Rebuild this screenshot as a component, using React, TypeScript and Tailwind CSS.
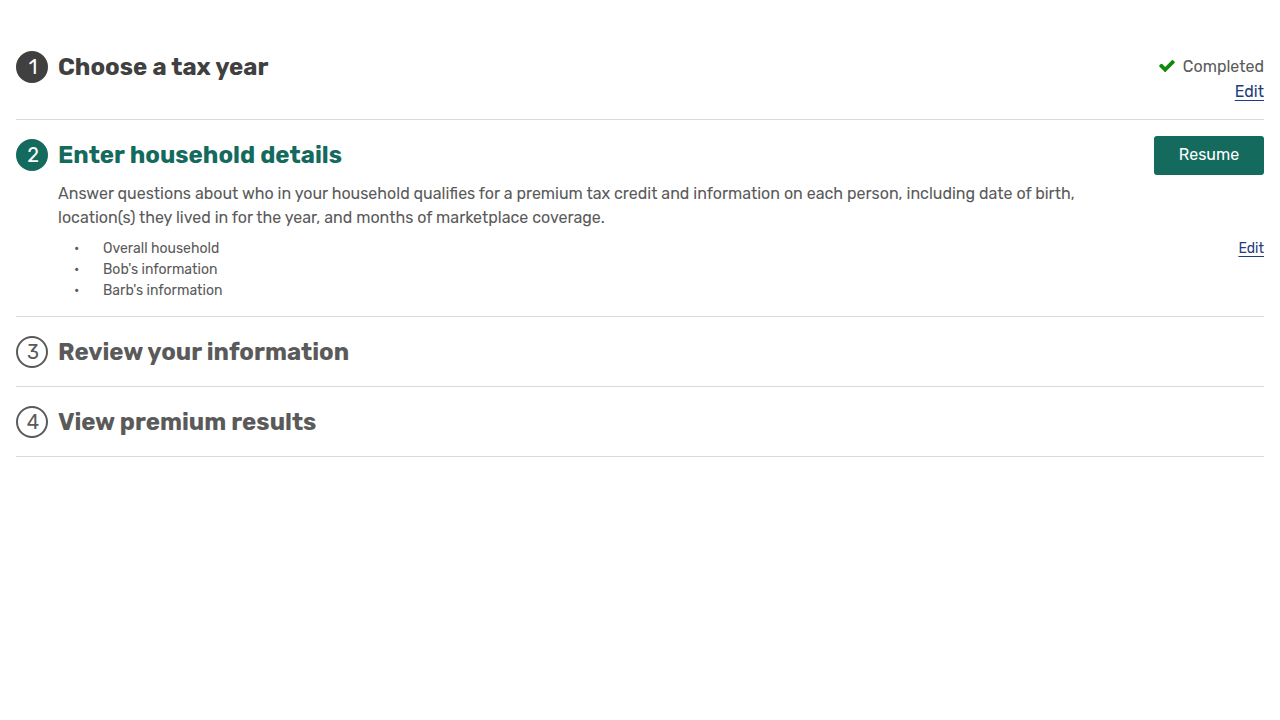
import type { ReactNode } from "react";

type Status = "completed" | "current" | "upcoming";

const circleStyles: Record<Status, string> = {
  completed: "border-[#404040] bg-[#404040] text-white",
  current: "border-[#146a5d] bg-[#146a5d] text-white",
  upcoming: "border-[#5a5a5a] bg-white text-[#5a5a5a]",
};

const headingStyles: Record<Status, string> = {
  completed: "text-[#404040]",
  current: "text-[#146a5d]",
  upcoming: "text-[#5a5a5a]",
};

const people = ["Overall household", "Bob's information", "Barb's information"];

function CheckIcon() {
  return (
    <svg viewBox="121 334 1550 1188" className="mb-0.5 h-3 w-4 fill-[#12890e]" aria-hidden="true">
      <path d="M1671 566q0 40-28 68l-724 724-136 136q-28 28-68 28t-68-28l-136-136-362-362q-28-28-28-68t28-68l136-136q28-28 68-28t68 28l294 295 656-657q28-28 68-28t68 28l136 136q28 28 28 68z" />
    </svg>
  );
}

function EditLink({ label }: { label: string }) {
  return (
    <a
      href="#edit"
      aria-label={label}
      className="text-[#1f3d7c] underline decoration-1 underline-offset-3"
    >
      Edit
    </a>
  );
}

interface StepProps {
  number: number;
  title: string;
  status: Status;
  action?: ReactNode;
  children?: ReactNode;
}

function Step({ number, title, status, action, children }: StepProps) {
  return (
    <li className="flex items-start gap-2.5 border-b border-[#d9d9d9] pt-4 pb-3.5">
      <span
        className={`mt-[3px] flex size-8 shrink-0 items-center justify-center rounded-full border-2 pl-0.5 text-xl leading-none ${circleStyles[status]}`}
      >
        {number}
      </span>
      <div className="min-w-0 flex-1">
        <h2 className={`text-2xl leading-[39px] font-bold ${headingStyles[status]}`}>{title}</h2>
        {children}
      </div>
      {action}
    </li>
  );
}

export default function App() {
  return (
    <main className="bg-white px-4 pt-8 font-['Rubik','Roboto',sans-serif] text-base text-[#5a5a5a]">
      <ol>
        <Step
          number={1}
          title="Choose a tax year"
          status="completed"
          action={
            <div className="flex flex-col items-end gap-px pt-[7px] pb-px leading-6">
              <span className="flex items-center gap-2">
                <CheckIcon />
                Completed
              </span>
              <span>
                <EditLink label="Edit tax year" />
              </span>
            </div>
          }
        />
        <Step
          number={2}
          title="Enter household details"
          status="current"
          action={
            <div className="flex flex-col items-end">
              <button
                type="button"
                className="h-[39px] w-[110px] rounded-[3px] bg-[#146a5d] pb-0.5 text-base text-white"
              >
                Resume
              </button>
              <span className="mt-[63px] text-sm leading-[21px]">
                <EditLink label="Edit overall household" />
              </span>
            </div>
          }
        >
          <p className="mt-[7px] pr-10 leading-6">
            Answer questions about who in your household qualifies for a premium tax credit and information on each
            person, including date of birth, location(s) they lived in for the year, and months of marketplace coverage.
          </p>
          <ul className="mt-2 pb-px pl-4 text-sm leading-[21px]">
            {people.map((item) => (
              <li key={item} className="flex">
                <span className="w-[29px]" aria-hidden="true">
                  •
                </span>
                {item}
              </li>
            ))}
          </ul>
        </Step>
        <Step number={3} title="Review your information" status="upcoming" />
        <Step number={4} title="View premium results" status="upcoming" />
      </ol>
    </main>
  );
}
